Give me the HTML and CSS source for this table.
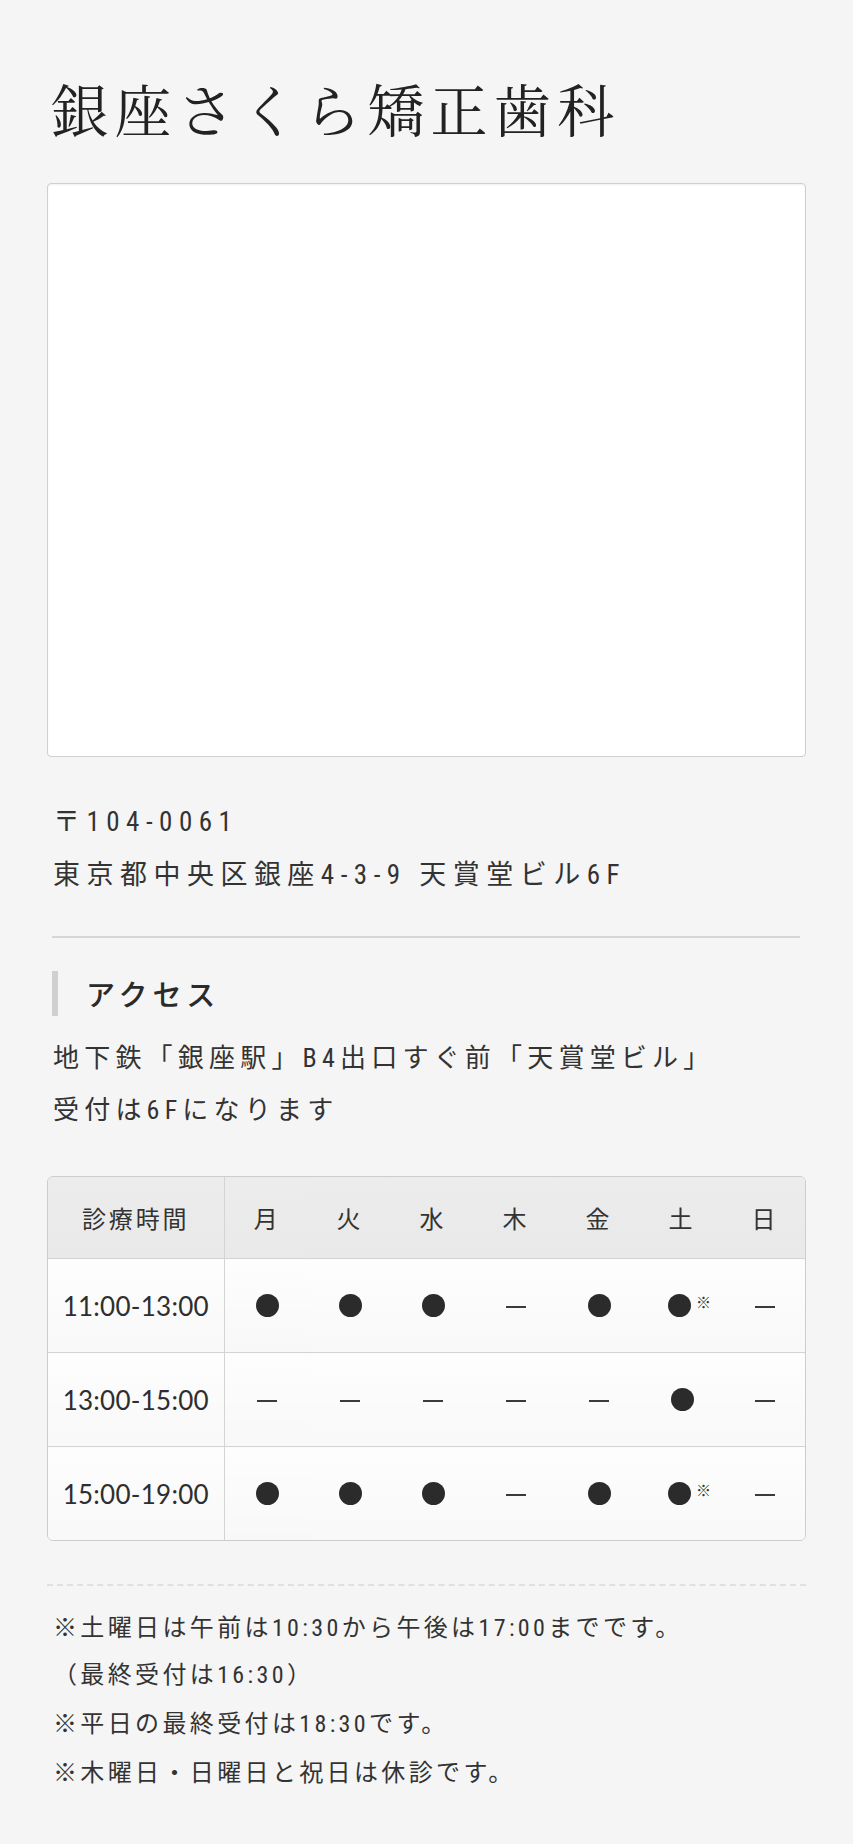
FILE: index.html
```html
<!DOCTYPE html>
<html lang="ja">
<head>
  <meta charset="UTF-8" />
  <meta name="viewport" content="width=device-width, initial-scale=1" />
  <title>銀座さくら矯正歯科 アクセス</title>
  <link rel="stylesheet" href="styles.css">
</head>
<body>

  <div class="container">
    <h1 class="clinic-name">銀座さくら矯正歯科</h1>

    <!-- map area -->
    <div class="map"></div>

    <div class="address">
      <p>〒104-0061</p>
      <p>東京都中央区銀座4-3-9 天賞堂ビル6F</p>
    </div>

    <hr class="rule" />

    <h2 class="section-title">アクセス</h2>
    <div class="access-text">
      <p>地下鉄「銀座駅」B4出口すぐ前「天賞堂ビル」</p>
      <p>受付は6Fになります</p>
    </div>

    <div class="schedule">
      <table>
        <colgroup>
          <col class="col-time" />
          <col span="7" />
        </colgroup>
        <thead>
          <tr>
            <th class="time-head">診療時間</th>
            <th>月</th>
            <th>火</th>
            <th>水</th>
            <th>木</th>
            <th>金</th>
            <th>土</th>
            <th>日</th>
          </tr>
        </thead>
        <tbody>
          <tr>
            <td class="time">11:00-13:00</td>
            <td><span class="dot"></span></td>
            <td><span class="dot"></span></td>
            <td><span class="dot"></span></td>
            <td><span class="dash"></span></td>
            <td><span class="dot"></span></td>
            <td><span class="dot"></span><span class="mark">※</span></td>
            <td><span class="dash"></span></td>
          </tr>
          <tr>
            <td class="time">13:00-15:00</td>
            <td><span class="dash"></span></td>
            <td><span class="dash"></span></td>
            <td><span class="dash"></span></td>
            <td><span class="dash"></span></td>
            <td><span class="dash"></span></td>
            <td><span class="dot"></span></td>
            <td><span class="dash"></span></td>
          </tr>
          <tr>
            <td class="time">15:00-19:00</td>
            <td><span class="dot"></span></td>
            <td><span class="dot"></span></td>
            <td><span class="dot"></span></td>
            <td><span class="dash"></span></td>
            <td><span class="dot"></span></td>
            <td><span class="dot"></span><span class="mark">※</span></td>
            <td><span class="dash"></span></td>
          </tr>
        </tbody>
      </table>
    </div>

    <div class="notes">
      <p>※土曜日は午前は10:30から午後は17:00までです。<br />（最終受付は16:30）</p>
      <p>※平日の最終受付は18:30です。</p>
      <p>※木曜日・日曜日と祝日は休診です。</p>
    </div>
  </div>

</body>
</html>
```

FILE: styles.css
```css
body {
  font-family: "Roboto Condensed", "Liberation Sans Narrow", "Noto Sans CJK JP", sans-serif;
  background-color: #f5f5f5;
  color: #333;
  margin: 0;
  padding: 0;
}

p {
  margin: 0;
}

.container {
  padding: 68px 47px 60px;
}

.clinic-name {
  font-family: "Noto Serif CJK JP", "Noto Sans CJK JP", serif;
  font-size: 57px;
  font-weight: 400;
  line-height: 78px;
  letter-spacing: 0.11em;
  color: #222;
  margin: 0 0 37px;
  padding-left: 4px;
}

.map {
  height: 572px;
  background-color: #fff;
  border: 1px solid #cfcfcf;
  border-radius: 4px;
  box-shadow: inset 0 1px 2px rgba(0,0,0,0.06);
}

.address {
  margin-top: 39px;
  padding-left: 6px;
  font-size: 27px;
  line-height: 53px;
  letter-spacing: 0.24em;
}

.rule {
  border: none;
  border-top: 2px solid #d6d6d6;
  margin: 34px 6px 0 5px;
}

.section-title {
  margin: 33px 0 0 5px;
  padding-left: 28px;
  border-left: 6px solid #d0d0d0;
  font-family: "Noto Sans CJK JP", sans-serif;
  font-size: 29px;
  font-weight: 500;
  line-height: 45px;
  letter-spacing: 0.17em;
  color: #2a2a2a;
}

.access-text {
  margin-top: 16px;
  padding-left: 6px;
  font-size: 26px;
  line-height: 52px;
  letter-spacing: 0.2em;
}

.schedule {
  margin-top: 40px;
  border: 1px solid #cdcdcd;
  border-radius: 6px;
  overflow: hidden;
  background-color: #fafafa;
}

.schedule table {
  width: 100%;
  border-collapse: collapse;
  table-layout: fixed;
}

.col-time {
  width: 176px;
}

.schedule th,
.schedule td {
  text-align: center;
  padding: 0 0 0 3px;
  border-top: 1px solid #d4d4d4;
}

.schedule thead th {
  height: 81px;
  border-top: none;
  background: linear-gradient(#ececec, #e9e9e9);
  font-family: "Noto Sans CJK JP", sans-serif;
  font-size: 24px;
  font-weight: 400;
  letter-spacing: 0.12em;
  color: #333;
}

.schedule tbody td {
  height: 93px;
  background: linear-gradient(#fdfdfd, #f8f8f8);
}

.schedule .time-head,
.schedule .time {
  padding: 0;
  border-right: 1px solid #d4d4d4;
}

.schedule .time {
  font-family: Lato, "Liberation Sans", sans-serif;
  font-size: 26px;
  letter-spacing: 0.01em;
  color: #2e2e2e;
}

.dot {
  display: inline-block;
  width: 23px;
  height: 23px;
  border-radius: 50%;
  background-color: #2b2b2b;
  vertical-align: middle;
}

.dash {
  display: inline-block;
  width: 20px;
  height: 2px;
  background-color: #3a3a3a;
  vertical-align: middle;
}

.mark {
  display: inline-block;
  margin-left: 5px;
  margin-right: -15px;
  font-family: "Noto Sans CJK JP", sans-serif;
  font-size: 15px;
  line-height: 1;
  vertical-align: top;
  color: #333;
}

.notes {
  margin-top: 43px;
  padding: 19px 0 0 6px;
  border-top: 2px dashed #e0e0e0;
  font-size: 24px;
  line-height: 47px;
  letter-spacing: 0.14em;
}

.notes p + p {
  margin-top: 2px;
}
```
